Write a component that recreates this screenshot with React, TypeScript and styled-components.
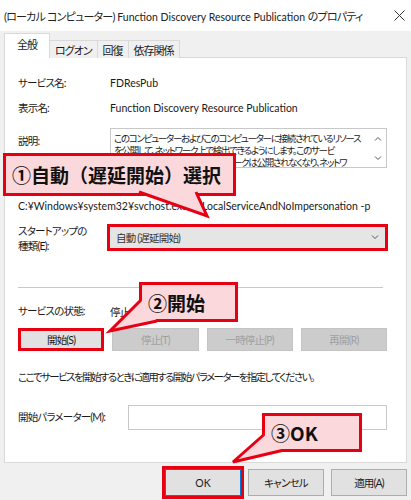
import styled, { createGlobalStyle } from 'styled-components';

const GlobalStyle = createGlobalStyle`
  html, body {
    margin: 0;
    padding: 0;
    background: #ffffff;
  }
`;

const Window = styled.div`
  position: relative;
  width: 411px;
  height: 500px;
  overflow: hidden;
  background: #f0f0f0;
  font-family: Lato, "Noto Sans CJK JP", sans-serif;
  font-feature-settings: 'palt';
  font-size: 10.5px;
  letter-spacing: -0.8px;
  color: #1a1a1a;
  display: flex;
  flex-direction: column;
`;

// latin runs keep their natural spacing
const Latin = styled.span<{ $size?: number }>`
  letter-spacing: 0;
  font-size: ${(p) => p.$size ?? 10.5}px;
`;

const TitleBar = styled.div`
  height: 31px;
  flex: none;
  background: #ffffff;
  display: flex;
  align-items: center;
  justify-content: space-between;
  padding: 0 6px 0 4px;
  font-size: 11px;
  color: #222;
  white-space: nowrap;
`;

const TabStrip = styled.div`
  height: 27px;
  flex: none;
  display: flex;
  align-items: flex-end;
  padding-left: 4px;
  margin-bottom: -1px;
  position: relative;
  z-index: 1;
`;

const Tab = styled.div<{ $active?: boolean }>`
  box-sizing: border-box;
  height: ${(p) => (p.$active ? 25 : 18)}px;
  padding: 0 ${(p) => (p.$active ? 12 : 5)}px ${(p) => (p.$active ? 4 : 0)}px;
  display: flex;
  align-items: center;
  font-size: 11px;
  letter-spacing: -1px;
  background: ${(p) => (p.$active ? '#ffffff' : '#f0f0f0')};
  border: 1px solid #d9d9d9;
  border-bottom: none;
  margin-left: ${(p) => (p.$active ? 0 : -1)}px;
`;

const Panel = styled.div`
  box-sizing: border-box;
  height: 406px;
  flex: none;
  margin: 0 4px;
  border: 1px solid #d9d9d9;
  background: #ffffff;
  padding: 0 19px 0 13px;
  display: flex;
  flex-direction: column;
`;

const Field = styled.div<{ $top: number; $label?: number; $h?: number }>`
  display: grid;
  grid-template-columns: ${(p) => p.$label ?? 92}px 1fr;
  align-items: center;
  margin-top: ${(p) => p.$top}px;
  min-height: ${(p) => p.$h ?? 16}px;
  white-space: nowrap;
`;

const Label = styled.div<{ $pad?: number }>`
  line-height: 15px;
  align-self: ${(p) => (p.$pad !== undefined ? 'start' : 'center')};
  padding-top: ${(p) => p.$pad ?? 0}px;
`;

const Line = styled.div<{ $top: number; $tight?: boolean }>`
  margin-top: ${(p) => p.$top}px;
  line-height: 16px;
  white-space: nowrap;
  letter-spacing: ${(p) => (p.$tight ? -1.6 : -0.8)}px;
`;

const DescBox = styled.div`
  box-sizing: border-box;
  height: 40px;
  border: 1px solid #c8c8c8;
  display: flex;
  overflow: hidden;
`;

const DescText = styled.div`
  flex: 1;
  padding: 4px 0 0 3px;
  line-height: 12px;
  font-size: 9.5px;
  letter-spacing: -1.3px;
  white-space: nowrap;
  overflow: hidden;
`;

const ScrollCol = styled.div`
  width: 16px;
  flex: none;
  display: flex;
  flex-direction: column;
  align-items: center;
  justify-content: space-between;
  padding: 7px 0 6px;
`;

const Combo = styled.div`
  box-sizing: border-box;
  height: 27px;
  margin-left: -3px;
  margin-right: -1px;
  border: 3px solid #e60012;
  background: #e5e5e5;
  display: flex;
  align-items: center;
  justify-content: space-between;
  padding: 0 6px;
  color: #333;
`;

const Separator = styled.div`
  height: 1px;
  background: #c8c8c8;
  margin: 33px 4px 0 0;
`;

const ButtonRow = styled.div`
  display: grid;
  grid-template-columns: repeat(4, 1fr);
  column-gap: 8px;
  margin-top: 9px;
`;

const Button = styled.div<{ $disabled?: boolean; $mark?: boolean }>`
  box-sizing: border-box;
  height: 23px;
  display: flex;
  align-items: center;
  justify-content: center;
  background: ${(p) => (p.$disabled ? '#cccccc' : '#e1e1e1')};
  color: ${(p) => (p.$disabled ? '#a0a0a0' : '#1a1a1a')};
  border: ${(p) => (p.$mark ? '3px solid #e60012' : `1px solid ${p.$disabled ? '#c4c4c4' : '#adadad'}`)};
`;

const ParamInput = styled.div`
  box-sizing: border-box;
  height: 25px;
  border: 1px solid #c8c8c8;
  background: #fff;
`;

const Footer = styled.div`
  display: flex;
  justify-content: flex-end;
  gap: 7px;
  padding: 6px 4px 0;
`;

const FooterButton = styled.div<{ $default?: boolean }>`
  box-sizing: border-box;
  width: 76px;
  height: 27px;
  display: flex;
  align-items: center;
  justify-content: center;
  background: #e1e1e1;
  border: 1px solid ${(p) => (p.$default ? '#0078d7' : '#adadad')};
  outline: ${(p) => (p.$default ? '3px solid #e60012' : 'none')};
`;

const Callout = styled.div<{ $x: number; $y: number; $w: number; $h: number; $size: number }>`
  position: absolute;
  left: ${(p) => p.$x}px;
  top: ${(p) => p.$y}px;
  width: ${(p) => p.$w}px;
  height: ${(p) => p.$h}px;
  box-sizing: border-box;
  border: 3px solid #e60012;
  background: #fbd8db;
  display: flex;
  align-items: center;
  padding-left: 6px;
  font-family: "Noto Sans CJK JP", sans-serif;
  font-feature-settings: normal;
  letter-spacing: 0;
  font-weight: 700;
  font-size: ${(p) => p.$size}px;
  color: #111;
  white-space: nowrap;
`;

const Tails = styled.svg`
  position: absolute;
  left: 0;
  top: 0;
  pointer-events: none;
`;

const tails = [
  { a: [139, 192], t: [207, 216], b: [196, 192] },
  { a: [141, 300], t: [110, 331], b: [157, 321] },
  { a: [263.5, 435], t: [233, 462], b: [282, 450.5] },
];

function Chevron({ up }: { up?: boolean }) {
  return (
    <svg width="8" height="5" viewBox="0 0 8 5">
      <path d={up ? 'M1 4.5 L4 1.5 L7 4.5' : 'M1 0.5 L4 3.5 L7 0.5'} fill="none" stroke="#555" strokeWidth="1" />
    </svg>
  );
}

export default function App() {
  return (
    <>
      <GlobalStyle />
      <Window>
        <TitleBar>
          <span>
            (ローカル コンピューター)<Latin> Function Discovery Resource Publication </Latin>のプロパティ
          </span>
          <svg width="11" height="11" viewBox="0 0 11 11">
            <path d="M0.5 0.5 L10.5 10.5 M10.5 0.5 L0.5 10.5" stroke="#333" strokeWidth="1" />
          </svg>
        </TitleBar>
        <TabStrip>
          <Tab $active>全般</Tab>
          <Tab>ログオン</Tab>
          <Tab>回復</Tab>
          <Tab>依存関係</Tab>
        </TabStrip>
        <Panel>
          <Field $top={15} $h={20}>
            <Label>サービス名:</Label>
            <Latin>FDResPub</Latin>
          </Field>
          <Field $top={5} $h={20}>
            <Label>表示名:</Label>
            <Latin>Function Discovery Resource Publication</Latin>
          </Field>
          <Field $top={10} $h={40}>
            <Label $pad={6}>説明:</Label>
            <DescBox>
              <DescText>
                このコンピューターおよびこのコンピューターに接続されているリソース
                <br />
                を公開して、ネットワーク上で検出できるようにします。このサービ
                <br />
                スを停止すると、リソースはネットワークは公開されなくなり、ネットワ
              </DescText>
              <ScrollCol>
                <Chevron up />
                <Chevron />
              </ScrollCol>
            </DescBox>
          </Field>
          <Line $top={8}>実行ファイルのパス:</Line>
          <Line $top={6}>
            <Latin>C:¥Windows¥system32¥svchost.exe -k LocalServiceAndNoImpersonation -p</Latin>
          </Line>
          <Field $top={7} $h={27}>
            <Label $pad={3}>
              スタートアップの
              <br />
              種類(E):
            </Label>
            <Combo>
              <span>自動 (遅延開始)</span>
              <Chevron />
            </Combo>
          </Field>
          <Separator />
          <Field $top={15}>
            <Label>サービスの状態:</Label>
            <span>停止</span>
          </Field>
          <ButtonRow>
            <Button $mark>開始(S)</Button>
            <Button $disabled>停止(T)</Button>
            <Button $disabled>一時停止(P)</Button>
            <Button $disabled>再開(R)</Button>
          </ButtonRow>
          <Line $top={18} $tight>
            ここでサービスを開始するときに適用する開始パラメーターを指定してください。
          </Line>
          <Field $top={20} $label={110} $h={25}>
            <Label>開始パラメーター(M):</Label>
            <ParamInput />
          </Field>
        </Panel>
        <Footer>
          <FooterButton $default>
            <Latin>OK</Latin>
          </FooterButton>
          <FooterButton>キャンセル</FooterButton>
          <FooterButton>適用(A)</FooterButton>
        </Footer>

        <Callout $x={3} $y={153} $w={233} $h={43} $size={19}>
          ①自動（遅延開始）選択
        </Callout>
        <Callout $x={139} $y={282} $w={99} $h={40} $size={19}>
          ②開始
        </Callout>
        <Callout $x={262} $y={413} $w={100} $h={39} $size={19}>
          ③OK
        </Callout>
        <Tails width="411" height="500" viewBox="0 0 411 500">
          {tails.map(({ a, t, b }, i) => (
            <g key={i}>
              <polygon points={`${a[0]},${a[1]} ${t[0]},${t[1]} ${b[0]},${b[1]}`} fill="#fbd8db" />
              <polyline
                points={`${a[0]},${a[1]} ${t[0]},${t[1]} ${b[0]},${b[1]}`}
                fill="none"
                stroke="#e60012"
                strokeWidth="3"
              />
            </g>
          ))}
        </Tails>
      </Window>
    </>
  );
}
